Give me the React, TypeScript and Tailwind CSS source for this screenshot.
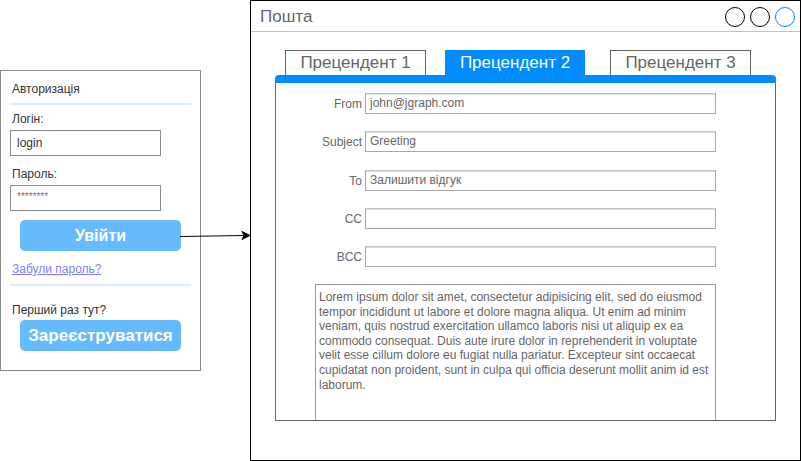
import React from "react";

const font = { fontFamily: '"Liberation Sans", Arial, sans-serif' };

function Field({ label, value, mt }: { label: string; value: string; mt: string }) {
  return (
    <div className={`flex items-center h-[21px] ${mt}`}>
      <div className="w-[89px] pr-[3px] text-right text-[12px] text-[#666]">{label}</div>
      <div className="w-[351px] h-[21px] border border-[#a8a8a8] border-t-[#c4c4c4] shadow-[inset_0_1px_0_#dcdcdc] px-[4px] text-[12px] leading-[19px] text-[#666]">
        {value}
      </div>
    </div>
  );
}

export default function App() {
  return (
    <div className="relative w-[801px] h-[461px] bg-white overflow-hidden" style={font}>
      {/* Login panel */}
      <div className="absolute left-0 top-[70px] w-[201px] h-[301px] border border-[#8c8c8c] bg-white flex flex-col px-[9px]">
        <div className="mt-[9px] h-[18px] leading-[18px] text-[12px] text-[#333] pl-[2px]">Авторизація</div>
        <div className="mt-[5px] h-[2px] w-[181px] bg-[#dbeeff]" />
        <div className="mt-[5px] h-[18px] leading-[18px] text-[12px] text-[#333] pl-[2px]">Логін:</div>
        <div className="mt-[2px] w-[151px] h-[26px] border border-[#8c8c8c] px-[6px] text-[12px] leading-[24px] text-[#333]">login</div>
        <div className="mt-[9px] h-[18px] leading-[18px] text-[12px] text-[#333] pl-[2px]">Пароль:</div>
        <div className="mt-[2px] w-[151px] h-[26px] border border-[#8c8c8c] px-[6px] text-[10px] leading-[22px] text-[#777]">********</div>
        <div className="ml-[10px] mt-[9px] w-[161px] h-[31px] rounded-[5px] bg-[#66bbff] text-white font-bold text-[16px] flex items-center justify-center">Увійти</div>
        <div className="mt-[9px] h-[18px] leading-[18px] text-[12px] text-[#8080ff] underline pl-[2px]">Забули пароль?</div>
        <div className="mt-[6px] h-[2px] w-[181px] bg-[#dbeeff]" />
        <div className="mt-[15px] h-[18px] leading-[18px] text-[12px] text-[#333] pl-[2px]">Перший раз тут?</div>
        <div className="ml-[10px] mt-[1px] w-[161px] h-[31px] rounded-[5px] bg-[#66bbff] text-white font-bold text-[17px] flex items-center justify-center">Зареєструватися</div>
      </div>

      {/* Arrow */}
      <svg className="absolute left-[180px] top-[227px]" width="72" height="18" viewBox="0 0 72 18">
        <path d="M0 9.5 L64 8.5" stroke="#000" strokeWidth="1" fill="none" />
        <path d="M70 8.4 L62 4.5 L64 8.5 L62 12.5 Z" fill="#000" stroke="#000" strokeWidth="1" />
      </svg>

      {/* Mail window */}
      <div className="absolute left-[250px] top-0 w-[551px] h-[461px] border border-black bg-white flex flex-col">
        <div className="h-[31px] border-b border-[#c0c0c0] flex items-center pl-[9px] pr-[5px]">
          <div className="text-[17px] text-[#666] leading-none mt-[1px]">Пошта</div>
          <div className="ml-auto flex gap-[5px] mt-[1px]">
            <div className="w-[20px] h-[20px] rounded-full border border-black" />
            <div className="w-[20px] h-[20px] rounded-full border border-black" />
            <div className="w-[20px] h-[20px] rounded-full border border-[#008cff]" />
          </div>
        </div>
        <div className="ml-[24px] mt-[18px] w-[501px] flex flex-col h-[371px]">
          <div className="flex h-[25px] pl-[10px]">
            <div className="w-[141px] h-[25px] border border-b-0 border-[#666] text-[17px] text-[#666] flex items-center justify-center">Прецендент 1</div>
            <div className="ml-[19px] w-[140px] h-[25px] bg-[#008cff] text-[17px] text-white flex items-center justify-center">Прецендент 2</div>
            <div className="ml-[25px] w-[141px] h-[25px] border border-b-0 border-[#666] text-[17px] text-[#666] flex items-center justify-center">Прецендент 3</div>
          </div>
          <div className="h-[8px] bg-[#008cff] rounded-t-[4px]" />
          <div className="flex-1 border border-t-0 border-[#666] flex flex-col">
            <Field label="From" value="john@jgraph.com" mt="mt-[10px]" />
            <Field label="Subject" value="Greeting" mt="mt-[17px]" />
            <Field label="To" value="Залишити відгук" mt="mt-[18px]" />
            <Field label="CC" value="" mt="mt-[17px]" />
            <Field label="BCC" value="" mt="mt-[17px]" />
            <div className="ml-[39px] mt-[17px] w-[401px] flex-1 border border-b-0 border-[#999] px-[3px] pt-[5px] text-[12px] leading-[14.6px] text-[#666]">
              Lorem ipsum dolor sit amet, consectetur adipisicing elit, sed do eiusmod tempor incididunt ut labore et dolore magna aliqua. Ut enim ad minim veniam, quis nostrud exercitation ullamco laboris nisi ut aliquip ex ea commodo consequat. Duis aute irure dolor in reprehenderit in voluptate velit esse cillum dolore eu fugiat nulla pariatur. Excepteur sint occaecat cupidatat non proident, sunt in culpa qui officia deserunt mollit anim id est laborum.
            </div>
          </div>
        </div>
      </div>
    </div>
  );
}
